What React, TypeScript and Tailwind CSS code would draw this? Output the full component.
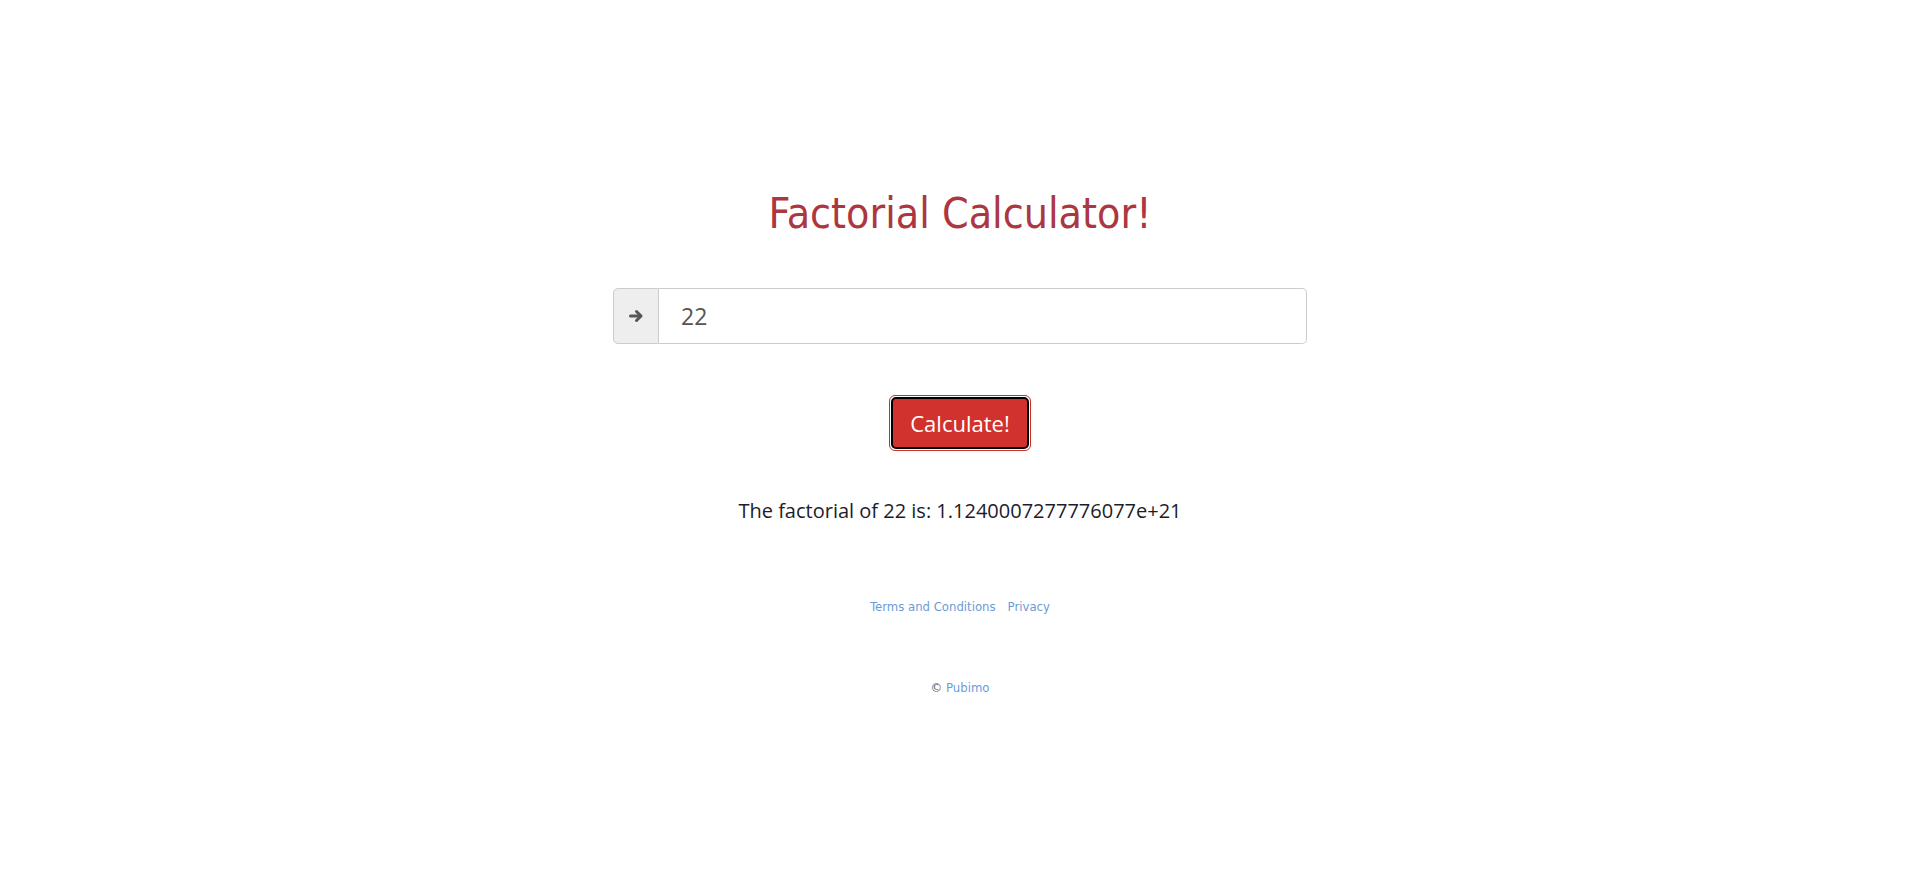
import { useState } from 'react';

function factorial(n: number): number {
  let r = 1;
  for (let i = 2; i <= n; i++) r *= i;
  return r;
}

export default function App() {
  const [value, setValue] = useState('22');
  const [result, setResult] = useState<{ n: number; f: number } | null>({ n: 22, f: factorial(22) });

  const onCalc = () => {
    const n = parseInt(value, 10);
    if (Number.isNaN(n)) return;
    setResult({ n, f: factorial(n) });
  };

  return (
    <div className="min-h-[885px] w-full bg-white font-['Open_Sans',sans-serif]">
      <div className="mx-auto flex w-[694px] flex-col items-center pt-[187px]">
        <h1 className="font-['DejaVu_Sans_Condensed','DejaVu_Sans',sans-serif] [font-stretch:condensed] text-[42.5px] leading-[54px] font-extralight text-[#ad3741]">
          Factorial Calculator!
        </h1>

        {/* input group */}
        <div className="mt-[47px] flex h-[56px] w-full">
          <span className="flex w-[46px] items-center justify-center rounded-l-[5px] border border-[#ccc] bg-[#eee] text-[#555]">
            <svg width="16" height="16" viewBox="0 0 16 16" fill="none" stroke="currentColor" strokeWidth="3" strokeLinecap="round" strokeLinejoin="round">
              <path d="M2.5 8h10" />
              <path d="M8.5 3.5L13 8l-4.5 4.5" />
            </svg>
          </span>
          <input
            type="text"
            value={value}
            onChange={(e) => setValue(e.target.value)}
            className="flex-1 rounded-r-[5px] border border-l-0 border-[#ccc] bg-white px-[22px] text-[23px] text-[#555] outline-none"
          />
        </div>

        <button
          onClick={onCalc}
          className="mt-[51px] rounded-[6px] border border-[#c9302c] p-px"
        >
          <span className="block rounded-[5px] border-2 border-black bg-[#d2322d] px-[17px] py-[8px] text-[22px] leading-[32px] text-white">
            Calculate!
          </span>
        </button>

        {result && (
          <p className="mt-[46px] text-[20px] leading-[28px] text-[#1c1c2a]">
            The factorial of {result.n} is: {String(result.f)}
          </p>
        )}

        <div className="mt-[72px] flex gap-[12px] font-['DejaVu_Sans_Condensed','DejaVu_Sans',sans-serif] [font-stretch:condensed] text-[13px] text-[#6a9bd8]">
          <a href="#">Terms and Conditions</a>
          <a href="#">Privacy</a>
        </div>

        <div className="mt-[61px] font-['DejaVu_Sans_Condensed','DejaVu_Sans',sans-serif] [font-stretch:condensed] text-[13px] text-[#555]">
          © <a href="#" className="text-[#6a9bd8]">Pubimo</a>
        </div>
      </div>
    </div>
  );
}
